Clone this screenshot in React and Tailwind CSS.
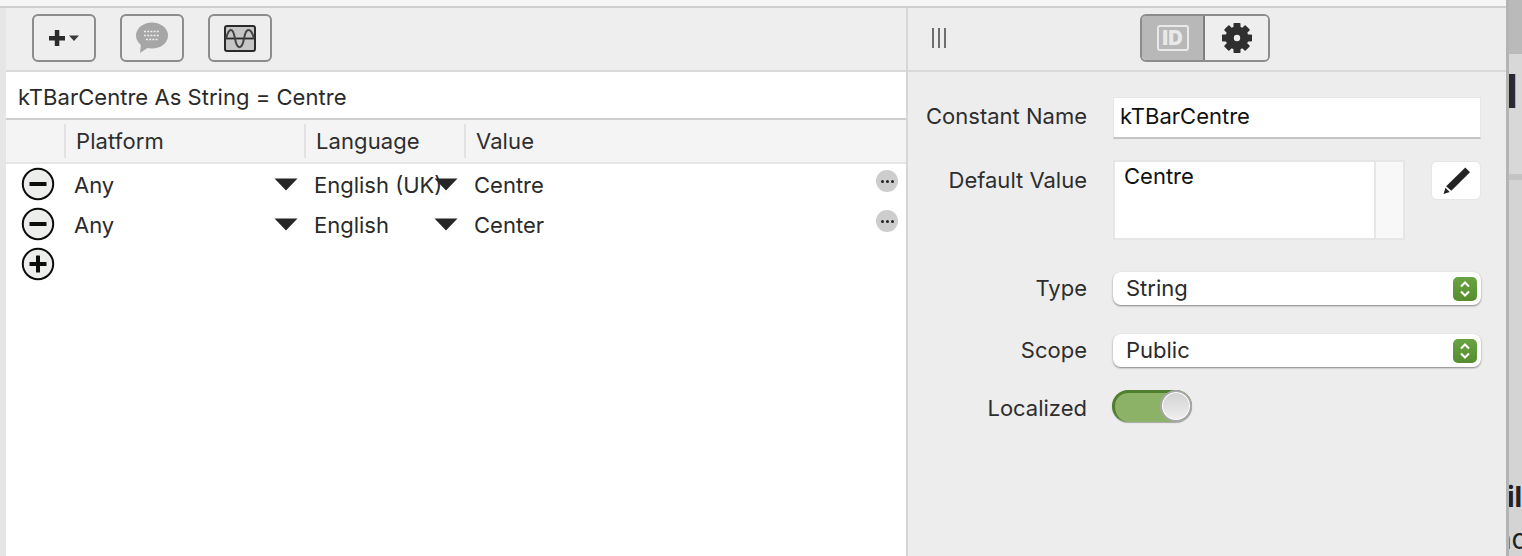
const font = { fontFamily: 'Inter, sans-serif' };

function CircleButton({ plus }) {
    return (
        <svg width="34" height="34" viewBox="0 0 34 34" className="block mb-[2px]">
            <circle cx="17" cy="17" r="15.2" fill="#eceeec" stroke="#0c0c0c" strokeWidth="2" />
            <rect x="8.5" y="15" width="17" height="4" rx="0.5" fill="#0c0c0c" />
            {plus && <rect x="15" y="8.5" width="4" height="17" rx="0.5" fill="#0c0c0c" />}
        </svg>
    );
}

function Caret() {
    return (
        <svg width="24" height="13" viewBox="0 0 24 13" className="block">
            <path d="M0.5 0.5H23.5L12 12.5Z" fill="#262626" />
        </svg>
    );
}

function ToolButton({ children }) {
    return (
        <div className="w-[64px] h-[48px] rounded-[6px] border-[2px] border-[#8c8c8c] bg-[#eeeeee] flex items-center justify-center">
            {children}
        </div>
    );
}

function Gear() {
    const teeth = [0, 45, 90, 135, 180, 225, 270, 315];
    return (
        <svg width="32" height="32" viewBox="0 0 32 32">
            <circle cx="16" cy="16" r="11.5" fill="#2f2f2f" />
            {teeth.map((deg) => (
                <rect key={deg} x="12.5" y="1" width="7" height="8" rx="0.8" fill="#2f2f2f" transform={`rotate(${deg} 16 16)`} />
            ))}
            <circle cx="16" cy="16" r="3.2" fill="#eeeeee" />
        </svg>
    );
}

function Stepper() {
    return (
        <div className="w-[24px] h-[24px] rounded-[5px] bg-gradient-to-b from-[#6aa343] to-[#558d30] flex items-center justify-center">
            <svg width="12" height="18" viewBox="0 0 12 18" fill="none" stroke="#ffffff" strokeWidth="2">
                <path d="M2 6.5L6 2.5L10 6.5" />
                <path d="M2 11.5L6 15.5L10 11.5" />
            </svg>
        </div>
    );
}

function SelectField({ value }) {
    return (
        <div className="w-[368px] h-[33px] rounded-[8px] bg-white shadow-[0_1px_2px_rgba(0,0,0,0.45)] flex items-center justify-between pl-[13px] pr-[4px] text-[22px] text-[#2a2a2a]">
            <span className="mb-[2px]">{value}</span>
            <Stepper />
        </div>
    );
}

function Label({ children, className = '' }) {
    return <div className={`w-[179px] text-right text-[22px] text-[#2e2e2e] shrink-0 ${className}`}>{children}</div>;
}

const rows = [
    { lang: 'English (UK)', value: 'Centre' },
    { lang: 'English', value: 'Center' },
];

export default function App() {
    return (
        <div style={font} className="w-[1522px] h-[556px] overflow-hidden flex bg-[#d2d2d2] leading-none">
            <div className="w-[1506px] shrink-0 flex flex-col">
                {/* window strip on top */}
                <div className="h-[8px] shrink-0 bg-[#f6f6f6] border-b-[2px] border-[#cfcfcf]" />

                <div className="flex-1 flex min-h-0">
                    <div className="w-[6px] shrink-0 bg-[#e6e6e6]" />

                    {/* Left pane */}
                    <div className="w-[900px] shrink-0 flex flex-col bg-white">
                        <div className="h-[64px] shrink-0 bg-[#eeeeee] border-b-[2px] border-[#d9d9d9] flex items-center gap-[24px] pl-[26px] pb-[2px]">
                            <ToolButton>
                                <svg width="34" height="22" viewBox="0 0 34 22">
                                    <rect x="2" y="9" width="16" height="4.5" fill="#2b2b2b" />
                                    <rect x="7.8" y="3" width="4.5" height="16" fill="#2b2b2b" />
                                    <path d="M22 8.5H32L27 14Z" fill="#3a3a3a" />
                                </svg>
                            </ToolButton>
                            <ToolButton>
                                <svg width="34" height="32" viewBox="0 0 34 32">
                                    <ellipse cx="17" cy="13.5" rx="16" ry="13" fill="#a6a6a6" />
                                    <path d="M6 22L5 31L14 25Z" fill="#a6a6a6" />
                                    <g stroke="#eeeeee" strokeWidth="1.6" strokeDasharray="2 1.2">
                                        <path d="M9 9.5H25" />
                                        <path d="M9 13.5H25" />
                                        <path d="M11 17.5H23" />
                                    </g>
                                </svg>
                            </ToolButton>
                            <ToolButton>
                                <svg width="32" height="27" viewBox="0 0 32 27">
                                    <rect x="1" y="1" width="30" height="25" rx="2" fill="#c6c6c6" stroke="#2a2a2a" strokeWidth="2" />
                                    <path d="M1 13.5H31" stroke="#2a2a2a" strokeWidth="1.8" />
                                    <path d="M2 13.5C5 2 9 2 11 13.5C13 25 18 25 20 13.5C22 2 27 2 30 13.5" fill="none" stroke="#444444" strokeWidth="2" />
                                </svg>
                            </ToolButton>
                        </div>

                        <div className="h-[48px] shrink-0 flex items-center pl-[12px] pt-[4px] border-b-[2px] border-[#cfcfcf] text-[22px] tracking-[0.03px] text-[#2a2a2a]">
                            kTBarCentre As String = Centre
                        </div>

                        <div className="h-[44px] shrink-0 bg-[#f4f4f4] border-b-[2px] border-[#e6e6e6] grid grid-cols-[58px_240px_160px_1fr] items-center text-[22px] tracking-[0.1px] text-[#2e2e2e]">
                            <div />
                            <div className="h-[34px] border-l-[2px] border-[#e2e2e2] pl-[10px] flex items-center">Platform</div>
                            <div className="h-[34px] border-l-[2px] border-[#e2e2e2] pl-[10px] flex items-center">Language</div>
                            <div className="h-[34px] border-l-[2px] border-[#e2e2e2] pl-[10px] flex items-center">Value</div>
                        </div>

                        <div className="pt-[1px]">
                            {rows.map((row) => (
                                <div key={row.value} className="h-[40px] grid grid-cols-[15px_34px_19px_1fr] items-center text-[22px] text-[#2a2a2a]">
                                    <div />
                                    <CircleButton />
                                    <div />
                                    <div className="grid grid-cols-[240px_160px_1fr] items-center">
                                        <div className="relative">
                                            <span>Any</span>
                                            <span className="absolute right-[16px] top-[4px]"><Caret /></span>
                                        </div>
                                        <div className="relative">
                                            <span className="whitespace-nowrap">{row.lang}</span>
                                            <span className="absolute right-[16px] top-[4px]"><Caret /></span>
                                        </div>
                                        <div className="flex items-center justify-between pr-[8px]">
                                            <span>{row.value}</span>
                                            <div className="w-[22px] h-[22px] rounded-full bg-[#cdcdcd] flex items-center justify-center gap-[2px] mb-[8px]">
                                                <span className="w-[3px] h-[3px] rounded-full bg-[#222222]" />
                                                <span className="w-[3px] h-[3px] rounded-full bg-[#222222]" />
                                                <span className="w-[3px] h-[3px] rounded-full bg-[#222222]" />
                                            </div>
                                        </div>
                                    </div>
                                </div>
                            ))}
                            <div className="h-[40px] pl-[15px] flex items-center">
                                <CircleButton plus />
                            </div>
                        </div>
                    </div>

                    <div className="w-[2px] shrink-0 bg-[#d6d6d6]" />

                    {/* Right pane */}
                    <div className="w-[598px] shrink-0 bg-[#ededed] flex flex-col">
                        <div className="h-[64px] shrink-0 border-b-[2px] border-[#d9d9d9] relative flex items-center justify-center pb-[2px]">
                            <div className="absolute left-[24px] top-[20px] flex gap-[4px]">
                                <div className="w-[2px] h-[20px] bg-[#6f6f6f]" />
                                <div className="w-[2px] h-[20px] bg-[#6f6f6f]" />
                                <div className="w-[2px] h-[20px] bg-[#6f6f6f]" />
                            </div>
                            <div className="flex h-[48px] w-[130px] rounded-[6px] border-[2px] border-[#8c8c8c] overflow-hidden ml-[-4px]">
                                <div className="w-[63px] bg-[#b8b8b8] border-r-[2px] border-[#7f7f7f] flex items-center justify-center">
                                    <div className="w-[32px] h-[26px] rounded-[3px] border-[2px] border-[#e9e9e9] text-[#e9e9e9] text-[20px] font-black flex items-center justify-center">
                                        ID
                                    </div>
                                </div>
                                <div className="flex-1 bg-[#eeeeee] flex items-center justify-center">
                                    <Gear />
                                </div>
                            </div>
                        </div>

                        <div className="pt-[25px] flex flex-col">
                            <div className="flex items-center gap-[26px] h-[42px]">
                                <Label className="mb-[4px]">Constant Name</Label>
                                <div className="w-[368px] h-[42px] bg-white border-b-[2px] border-[#c4c4c4] border-x border-t border-x-[#e6e6e6] border-t-[#e6e6e6] flex items-center pl-[6px] pb-[4px] text-[22px] text-[#111111]">
                                    kTBarCentre
                                </div>
                            </div>

                            <div className="flex items-start gap-[26px] mt-[21px]">
                                <div className="pt-[9px]"><Label>Default Value</Label></div>
                                <div className="w-[292px] h-[80px] border-[2px] border-[#e6e6e6] bg-white flex">
                                    <div className="w-[259px] pl-[9px] pt-[3px] text-[22px] text-[#111111]">Centre</div>
                                    <div className="flex-1 border-l-[2px] border-[#e6e6e6] bg-[#f8f8f8]" />
                                </div>
                                <div className="w-[50px] h-[39px] mt-[1px] rounded-[6px] bg-white border-[1px] border-[#e6e6e6] flex items-center justify-center">
                                    <svg width="29" height="29" viewBox="0 0 28 28">
                                        <path d="M22.5 1.5L27 6L9 24L4 19.5Z" fill="#232323" />
                                        <path d="M3.3 21L7.5 25L1.5 27Z" fill="#232323" />
                                    </svg>
                                </div>
                            </div>

                            <div className="flex items-center gap-[26px] mt-[32px] h-[33px]">
                                <Label className="mb-[2px]">Type</Label>
                                <SelectField value="String" />
                            </div>

                            <div className="flex items-center gap-[26px] mt-[29px] h-[33px]">
                                <Label className="mb-[2px]">Scope</Label>
                                <SelectField value="Public" />
                            </div>

                            <div className="flex items-center gap-[25px] mt-[23px] h-[32px]">
                                <Label className="mt-[4px]">Localized</Label>
                                <div className="relative w-[80px] h-[32px] rounded-full bg-[#8cb268] border-t-[3px] border-l-[3px] border-[#4f7f2c] shadow-[0_1px_1px_rgba(0,0,0,0.3)]">
                                    <div className="absolute right-[0px] top-[-3px] w-[32px] h-[32px] rounded-full border-[2px] border-[#a8a8a8] bg-gradient-to-b from-[#d2d2d2] to-[#efefef] ring-1 ring-inset ring-white" />
                                </div>
                            </div>
                        </div>
                    </div>
                </div>
            </div>

            {/* Window behind, clipped */}
            <div className="w-[16px] shrink-0 border-l-[3px] border-[#b4b4b4] flex flex-col overflow-hidden">
                <div className="h-[54px] shrink-0 bg-[#bababa]" />
                <div className="h-[120px] shrink-0 bg-[#d8d8d8] flex justify-end pr-[4px] pt-[14px]">
                    <span className="text-[46px] font-bold text-[#2a2a2a] whitespace-nowrap">d</span>
                </div>
                <div className="h-[6px] shrink-0 bg-[#c4c4c4]" />
                <div className="flex-1 bg-[#d4d4d4] flex flex-col pt-[303px] gap-[14px] text-[28px] text-[#222222]">
                    <span className="font-bold whitespace-nowrap ml-[-2px]">ile</span>
                    <span className="whitespace-nowrap ml-[-14px]">nd</span>
                </div>
            </div>
        </div>
    );
}
